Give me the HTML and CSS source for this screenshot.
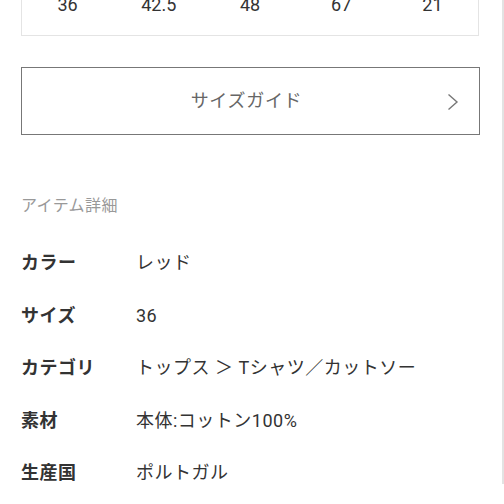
FILE: index.html
```html
<!DOCTYPE html>
<html lang="ja">
<head>
    <meta charset="UTF-8">
    <meta name="viewport" content="width=device-width, initial-scale=1.0">
    <title>アイテム詳細</title>
    <link rel="stylesheet" href="styles.css">
</head>
<body>
    <div class="page">
        <div class="size-table">
            <div class="size-row">
                <span>36</span>
                <span>42.5</span>
                <span>48</span>
                <span>67</span>
                <span>21</span>
            </div>
        </div>

        <a class="size-guide" href="#size-guide">
            <span class="size-guide-text">サイズガイド</span>
            <svg class="chevron" width="12" height="18" viewBox="0 0 12 18">
                <polyline points="1.5,1.5 10,9 1.5,16.5" fill="none" stroke="#777" stroke-width="1.4"/>
            </svg>
        </a>

        <h2 class="section-title">アイテム詳細</h2>

        <dl class="details">
            <div class="detail-row">
                <dt>カラー</dt>
                <dd>レッド</dd>
            </div>
            <div class="detail-row">
                <dt>サイズ</dt>
                <dd>36</dd>
            </div>
            <div class="detail-row">
                <dt>カテゴリ</dt>
                <dd>トップス ＞ Tシャツ／カットソー</dd>
            </div>
            <div class="detail-row">
                <dt>素材</dt>
                <dd>本体:コットン100%</dd>
            </div>
            <div class="detail-row">
                <dt>生産国</dt>
                <dd>ポルトガル</dd>
            </div>
        </dl>
    </div>
</body>
</html>
```

FILE: styles.css
```css
html, body {
    margin: 0;
    padding: 0;
    background-color: #fff;
}

body {
    font-family: Roboto, "Noto Sans CJK JP", sans-serif;
    color: #333;
    overflow: hidden;
}

.page {
    height: 504px;
    padding: 0 22px 0 21px;
    border-right: 2px solid #e3e3e3;
    box-sizing: border-box;
}

.size-table {
    margin-top: -20px;
    padding: 12px 0 18px;
    border: 1px solid #e4e4e4;
    margin-right: 1px;
}

.size-row {
    display: grid;
    grid-template-columns: repeat(5, 1fr);
    font-size: 18px;
    line-height: 24px;
    text-align: center;
    color: #333;
}

.size-guide {
    display: flex;
    align-items: center;
    justify-content: center;
    position: relative;
    height: 66px;
    margin-top: 31px;
    padding-right: 8px;
    border: 1px solid #777;
    text-decoration: none;
    color: #666;
}

.size-guide-text {
    font-size: 18px;
    line-height: 24px;
    letter-spacing: 0.7px;
}

.chevron {
    position: absolute;
    right: 20px;
    top: 25px;
}

.section-title {
    margin: 59px 0 0;
    font-size: 16px;
    line-height: 24px;
    font-weight: normal;
    letter-spacing: 0.4px;
    color: #999;
}

.details {
    margin: 19px 0 0;
}

.detail-row {
    display: flex;
    padding: 14px 0;
    font-size: 18px;
    line-height: 24.5px;
    letter-spacing: 0.5px;
}

.detail-row dt {
    width: 115px;
    font-weight: bold;
    color: #333;
}

.detail-row dd {
    margin: 0;
    color: #333;
}
```
